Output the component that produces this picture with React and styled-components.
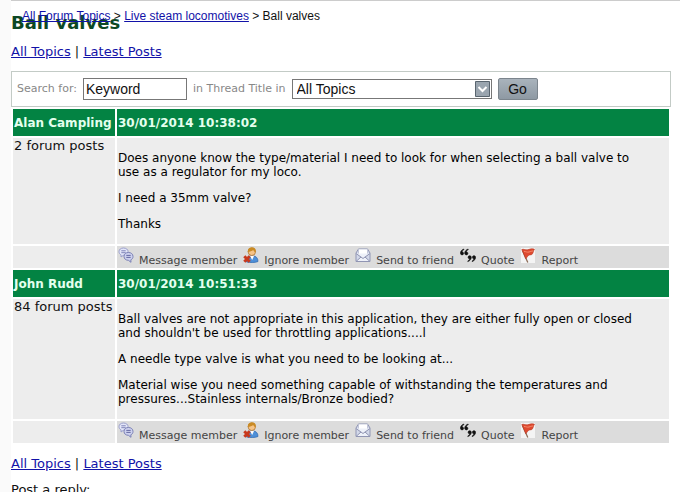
import React, { useState } from 'react';
import styled, { createGlobalStyle } from 'styled-components';

const posts = [
  {
    id: 1,
    author: 'Alan Campling',
    count: '2 forum posts',
    date: '30/01/2014 10:38:02',
    body: [
      'Does anyone know the type/material I need to look for when selecting a ball valve to\nuse as a regulator for my loco.',
      'I need a 35mm valve?',
      'Thanks'
    ]
  },
  {
    id: 2,
    author: 'John Rudd',
    count: '84 forum posts',
    date: '30/01/2014 10:51:33',
    body: [
      "Ball valves are not appropriate in this application, they are either fully open or closed\nand shouldn't be used for throttling applications....l",
      'A needle type valve is what you need to be looking at...',
      'Material wise you need something capable of withstanding the temperatures and\npressures...Stainless internals/Bronze bodied?'
    ]
  }
];

//* two speech bubbles
const MessageIcon = () => (
  <Icon viewBox='0 0 16 16' aria-hidden='true'>
    <path
      d='M5.500 1C2.800 1 1 2.500 1 4.700c0 1.500.9 2.600 2.100 3.200L3 10l2.400-1.700c2.700.1 4.700-1.300 4.700-3.600C10.100 2.500 8.100 1 5.500 1z'
      fill='#e3e6f8'
      stroke='#9a9ecb'
    />
    <path d='M3.300 3.800h4.400M3.300 5.700h4.400' stroke='#7f84b8' />
    <path
      d='M10.500 5.500c-2.700 0-4.500 1.500-4.500 4 0 2.300 1.800 3.800 4.400 3.800l2.600 2-.2-2.500c1.500-.6 2.200-1.700 2.200-3.300 0-2.500-1.900-4-4.500-4z'
      fill='#cdd1ee'
      stroke='#7b80b5'
    />
    <path d='M8.300 8.400h4.400M8.300 10.400h4.400' stroke='#666ba3' />
  </Icon>
);

//* person with a red cross
const IgnoreIcon = () => (
  <Icon viewBox='0 0 16 16' aria-hidden='true'>
    <path
      d='M3.500 15c0-4 1.500-6 4.500-6h2c3 0 5 2 5 5.500-2 1.200-8 1.300-11.500.5z'
      fill='#4d8fd8'
      stroke='#2c66ad'
      strokeWidth='.7'
    />
    <path d='M7 9h4l-1.800 4z' fill='#fff' />
    <circle cx='8.800' cy='4.800' r='3.700' fill='#f6c489' stroke='#a8671d' strokeWidth='.7' />
    <path
      d='M4.800 5C4.500 1.800 6.500.3 9 .3c2.600 0 4.200 1.900 3.700 4.900C11.500 5 10.800 4 10.200 3 8.800 4.300 7 4.700 4.800 5z'
      fill='#c98a24'
    />
    <path d='M1.300 9.300l5.400 5.400M6.700 9.300l-5.400 5.400' stroke='#c8391d' strokeWidth='3' />
  </Icon>
);

//* open envelope
const SendIcon = () => (
  <Icon viewBox='0 0 16 16' aria-hidden='true'>
    <path d='M1 6l2.500-4h9L15 6v8.500H1z' fill='#d3d9ea' stroke='#9095b3' />
    <path d='M3.500 2h9v7L8 12 3.500 9z' fill='#fff' stroke='#b3b8cd' strokeWidth='.7' />
    <path d='M1 6.500L6 10l-5 4.500h14L10 10l5-3.500' fill='#eef1f9' stroke='#9095b3' />
    <path d='M6 10l2 1.500 2-1.500' fill='none' stroke='#9095b3' />
  </Icon>
);

//* opening and closing quote marks
const QuoteIcon = () => (
  <Icon viewBox='0 0 16 16' aria-hidden='true'>
    <g fill='#111' stroke='#111' strokeWidth='.6'>
      <path d='M3.800 2C1.400 3 .2 4.700.4 6.500c.2 1.900 3.200 1.800 3.200-.1 0-1-.7-1.500-1.500-1.500.1-1 .8-1.800 1.900-2.300z' />
      <path d='M8.100 2C5.700 3 4.500 4.700 4.700 6.500c.2 1.900 3.200 1.800 3.200-.1 0-1-.7-1.500-1.500-1.500.1-1 .8-1.800 1.900-2.300z' />
      <path d='M7.900 14.600c2.400-1 3.600-2.700 3.400-4.500-.2-1.900-3.200-1.800-3.200.1 0 1 .7 1.500 1.500 1.500-.1 1-.8 1.800-1.900 2.300z' />
      <path d='M12.200 14.600c2.400-1 3.600-2.700 3.400-4.500-.2-1.900-3.200-1.800-3.200.1 0 1 .7 1.500 1.500 1.500-.1 1-.8 1.800-1.900 2.300z' />
    </g>
  </Icon>
);

//* red flag on a white tile
const ReportIcon = () => (
  <Icon viewBox='0 0 16 16' aria-hidden='true'>
    <path d='M0 1h14v15H0z' fill='#f4f4f4' />
    <path d='M1.500 3.500l5.300 12' stroke='#8b6a55' strokeWidth='1.300' />
    <path
      d='M.8 2.500c2-.8 3.500.8 6 .2s4-1.400 6.700-.4c-1.300 1.400-.8 3-2.300 4.900-1 1-2.600.3-3.700 1.300-.8.700-1.600 1.800-2.700 3.300z'
      fill='#df4a30'
      stroke='#b73722'
      strokeWidth='.6'
    />
    <path d='M3 4.500c2 0 3 1 5 .5s2.500-1 4-1' fill='none' stroke='#f58a6c' />
  </Icon>
);

const actions = [
  { label: 'Message member', Glyph: MessageIcon },
  { label: 'Ignore member', Glyph: IgnoreIcon },
  { label: 'Send to friend', Glyph: SendIcon },
  { label: 'Quote', Glyph: QuoteIcon },
  { label: 'Report', Glyph: ReportIcon }
];

const TopicNav = () => (
  <Nav>
    <a href='#topics'>All Topics</a> | <a href='#latest'>Latest Posts</a>
  </Nav>
);

const Post = ({ post }) => (
  <tbody>
    <tr>
      <HeadCell scope='col'>{post.author}</HeadCell>
      <HeadCell scope='col'>{post.date}</HeadCell>
    </tr>
    <tr>
      <Cell>{post.count}</Cell>
      <Cell>
        {post.body.map((text) => (
          <P key={text}>{text}</P>
        ))}
      </Cell>
    </tr>
    <tr>
      <Cell />
      <Cell $dark>
        <Actions>
          {actions.map(({ label, Glyph }) => (
            <Action key={label} href='#action'>
              <Glyph />
              <span>{label}</span>
            </Action>
          ))}
        </Actions>
      </Cell>
    </tr>
  </tbody>
);

const App = () => {
  const [keyword, setKeyword] = useState('Keyword'); //* search text
  const [topic, setTopic] = useState('all'); //* chosen topic

  return (
    <>
      <GlobalStyle />
      <Page>
        <Breadcrumb aria-label='Breadcrumb'>
          <a href='#forum'>All Forum Topics</a> &gt;{' '}
          <a href='#steam'>Live steam locomotives</a> &gt; Ball valves
        </Breadcrumb>
        <Title>Ball valves</Title>
        <TopicNav />
        <SearchForm onSubmit={(e) => e.preventDefault()}>
          <label htmlFor='keyword'>Search for:</label>
          <Input
            type='text'
            id='keyword'
            value={keyword}
            onChange={(e) => setKeyword(e.target.value)}
          />
          <label htmlFor='topic'>in Thread Title in</label>
          <SelectWrap>
            <Select id='topic' value={topic} onChange={(e) => setTopic(e.target.value)}>
              <option value='all'>All Topics</option>
              <option value='steam'>Live steam locomotives</option>
            </Select>
            <Arrow viewBox='0 0 15 16' aria-hidden='true'>
              <path d='M.5.500h14v15H.5z' fill='#9aa5af' stroke='#59656f' />
              <path d='M3.500 6l4 4 4-4' fill='none' stroke='#fff' strokeWidth='2' />
            </Arrow>
          </SelectWrap>
          <Button type='submit'>Go</Button>
        </SearchForm>
        <Table>
          <colgroup>
            <AuthorCol />
            <col />
          </colgroup>
          {posts.map((post) => (
            <Post key={post.id} post={post} />
          ))}
        </Table>
        <TopicNav />
        <Reply>Post a reply:</Reply>
      </Page>
    </>
  );
};

export default App;

//*style the components
const GlobalStyle = createGlobalStyle`
  body {
    margin: 0;
    background-color: #fafafa;
    color: #111;
    font-family: Verdana, 'DejaVu Sans', sans-serif;
    font-size: 13px;
    line-height: 14px;
  }

  a {
    color: #1212a8;
  }
`;

const Page = styled.main`
  position: relative;
  margin-left: 11px;
  padding: 12px 9px 0 0;
  border-top: 1px solid #ccc;
  background-color: #fff;
`;

//* sits over the top of the title
const Breadcrumb = styled.nav`
  position: absolute;
  top: 8px;
  left: 11px;
  font-family: 'Liberation Sans', Arial, sans-serif;
  font-size: 12px;
`;

const Title = styled.h1`
  margin: 0 0 12px;
  color: #0c4824;
  font-size: 18px;
  line-height: 20px;
`;

const Nav = styled.nav`
  margin-bottom: 12px;
`;

const SearchForm = styled.form`
  display: flex;
  align-items: center;
  gap: 6px;
  padding: 6px 5px;
  border: 1px solid #c3cbc6;
  color: #888;
  font-size: 11px;
`;

const Input = styled.input`
  box-sizing: border-box;
  width: 104px;
  height: 22px;
  padding: 0 2px;
  border: 1px solid #777;
  background-color: #fff;
  color: #111;
  font-family: 'Liberation Sans', Arial, sans-serif;
  font-size: 14px;
`;

const SelectWrap = styled.div`
  position: relative;
  display: flex;
`;

const Select = styled.select`
  appearance: none;
  width: 200px;
  height: 20px;
  padding: 0 20px 0 4px;
  border: 1px solid #777;
  border-radius: 0;
  background-color: #fff;
  color: #111;
  font-family: 'Liberation Sans', Arial, sans-serif;
  font-size: 14px;
`;

const Arrow = styled.svg`
  position: absolute;
  top: 2px;
  right: 2px;
  width: 15px;
  height: 16px;
  pointer-events: none;
`;

const Button = styled.button`
  width: 40px;
  height: 22px;
  padding: 0;
  border: 1px solid #7c858d;
  border-radius: 2px;
  background: linear-gradient(#a9b3bc, #8e99a3);
  color: #111;
  font-family: 'Liberation Sans', Arial, sans-serif;
  font-size: 14px;
`;

const Table = styled.table`
  width: 100%;
  margin-bottom: 12px;
  border-spacing: 2px;
  table-layout: fixed;
`;

const AuthorCol = styled.col`
  width: 102px;
`;

const HeadCell = styled.th`
  height: 25px;
  padding: 1px;
  background-color: #038343;
  color: #e4ffee;
  font-size: 12px;
  text-align: left;
  white-space: nowrap;
`;

const Cell = styled.td`
  padding: 1px;
  background-color: ${({ $dark }) => ($dark ? '#dcdcdc' : '#ededed')};
  vertical-align: top;
`;

//* keeps the line breaks the member typed
const P = styled.p`
  margin: 12px 0;
  color: #000;
  font-size: 12px;
  white-space: pre-line;
`;

const Actions = styled.div`
  display: flex;
  flex-wrap: wrap;
  gap: 6px;
  height: 20px;
`;

const Action = styled.a`
  display: flex;
  gap: 5px;
  color: #444;
  font-size: 11px;
  text-decoration: none;

  span {
    padding-top: 7px;
  }
`;

const Icon = styled.svg`
  width: 16px;
  height: 16px;
  fill: none;
`;

const Reply = styled.p`
  margin: 0;
`;
